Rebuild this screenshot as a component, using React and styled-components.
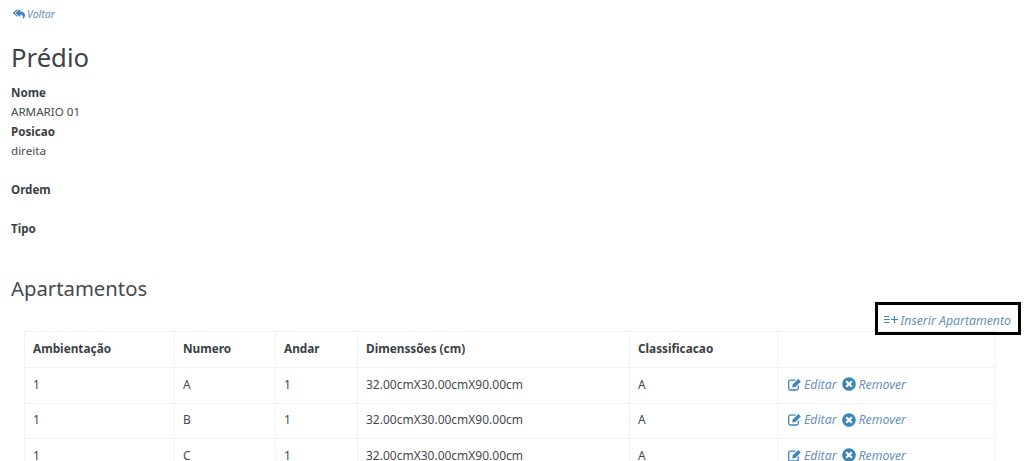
import React from 'react';
import styled, { createGlobalStyle } from 'styled-components';
import { FaReplyAll, FaTimesCircle } from 'react-icons/fa';

const GlobalStyle = createGlobalStyle`
  html, body {
    margin: 0;
    background: #fff;
    overflow: hidden;
  }
  body {
    font-family: "Noto Sans", "Open Sans", sans-serif;
    font-size: 12px;
    color: #464a4f;
  }
`;

const Page = styled.div`
  height: 461px;
  overflow: hidden;
  padding: 6px 3px 0 11px;
  box-sizing: border-box;
`;

const Link = styled.a`
  color: #6a8fbd;
  font-style: italic;
  display: inline-flex;
  align-items: center;
`;

const Glyph = styled.span`
  color: #3d85b8;
  display: inline-flex;
`;

const BackLink = styled(Link)`
  font-size: 10.6px;
  gap: 2px;
  height: 16px;
  margin-left: 2px;
`;

const Title = styled.h1`
  font-size: 25.7px;
  font-weight: 400;
  line-height: 36px;
  margin: 16px 0 7px;
  color: #3f4348;
`;

const Label = styled.div`
  font-size: 11.6px;
  font-weight: 700;
  line-height: 19.4px;
  height: 19.4px;
  color: #3a3f44;
`;

const Value = styled.div`
  font-size: 11.6px;
  line-height: 19.4px;
  height: 19.4px;
`;

const SubTitle = styled.h2`
  font-size: 20.3px;
  font-weight: 400;
  line-height: 28px;
  margin: 36px 0 0;
  color: #464a4f;
`;

const ActionRow = styled.div`
  display: flex;
  justify-content: flex-end;
  height: 29px;
`;

const InsertLink = styled(Link)`
  font-size: 12.3px;
  gap: 2px;
  height: 33px;
  box-sizing: border-box;
  border: 3px solid #000;
  padding: 3px 7px 0 6px;
  position: relative;
  z-index: 1;
`;

const Table = styled.table`
  width: 971px;
  margin-left: 13px;
  border-collapse: collapse;
  table-layout: fixed;
`;

const Th = styled.th`
  text-align: left;
  font-size: 11.8px;
  font-weight: 700;
  height: 36px;
  padding: 0 8px 3px;
  box-sizing: border-box;
  border: 1px solid #f1f2f3;
  color: #3a3f44;
  width: ${props => props.$w}px;
`;

const Td = styled.td`
  height: 35.5px;
  padding: 0 8px 2px;
  box-sizing: border-box;
  border: 1px solid #f1f2f3;
`;

const ActionCell = styled(Td)`
  padding: 0 8px 4px 10px;
`;

const RowAction = styled(Link)`
  font-size: 12.3px;
  gap: 3px;
  margin-right: 5px;
  vertical-align: middle;
`;

const ListPlus = () => (
  <svg width="14" height="10" viewBox="0 0 14 10" fill="none" stroke="#3d85b8" strokeWidth="1.2">
    <path d="M0 1.5h5.5M0 4.5h5.5M0 7.5h5.5M7 4.5h7M10.5 1v7" />
  </svg>
);

const EditIcon = () => (
  <svg width="13" height="13" viewBox="0 0 13 13" fill="none" stroke="#3d85b8" strokeWidth="1.3">
    <path d="M10.3 7.5v3a1.5 1.5 0 0 1-1.5 1.5H2.2A1.5 1.5 0 0 1 .7 10.5V3.7a1.5 1.5 0 0 1 1.5-1.5h5.3" />
    <path d="M4.2 9.4l.5-3 5.6-5.4 2.5 2.5-5.5 5.5z" fill="#3d85b8" stroke="none" />
  </svg>
);

const columns = [
  ['Ambientação', 150],
  ['Numero', 101],
  ['Andar', 82],
  ['Dimenssões (cm)', 272],
  ['Classificacao', 148],
  ['', 218],
];

const rows = ['A', 'B', 'C'];

export default function App() {
  return (
    <Page>
      <GlobalStyle />
      <BackLink><Glyph><FaReplyAll size={12} /></Glyph>Voltar</BackLink>
      <Title>Prédio</Title>
      <Label>Nome</Label>
      <Value>ARMARIO 01</Value>
      <Label>Posicao</Label>
      <Value>direita</Value>
      <Value />
      <Label>Ordem</Label>
      <Value />
      <Label>Tipo</Label>
      <SubTitle>Apartamentos</SubTitle>
      <ActionRow>
        <InsertLink><ListPlus />Inserir Apartamento</InsertLink>
      </ActionRow>
      <Table>
        <thead>
          <tr>
            {columns.map(([name, w]) => <Th key={w} $w={w}>{name}</Th>)}
          </tr>
        </thead>
        <tbody>
          {rows.map(r => (
            <tr key={r}>
              <Td>1</Td>
              <Td>{r}</Td>
              <Td>1</Td>
              <Td>32.00cmX30.00cmX90.00cm</Td>
              <Td>A</Td>
              <ActionCell>
                <RowAction><Glyph><EditIcon /></Glyph>Editar</RowAction>
                <RowAction><Glyph><FaTimesCircle size={14} /></Glyph>Remover</RowAction>
              </ActionCell>
            </tr>
          ))}
        </tbody>
      </Table>
    </Page>
  );
}
